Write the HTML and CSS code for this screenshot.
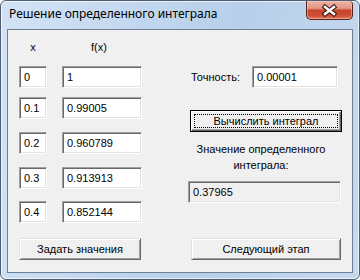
FILE: index.html
```html
<!DOCTYPE html>
<html lang="ru">
<head>
<meta charset="utf-8">
<title>Решение определенного интеграла</title>
<link rel="stylesheet" href="styles.css">
</head>
<body>
<div class="window">
  <div class="titlebar">
    <span class="title">Решение определенного интеграла</span>
    <div class="close">
      <svg width="45" height="17" viewBox="0 0 45 17">
        <path d="M18 5 L27 12 M27 5 L18 12" stroke="#3b1610" stroke-width="4.6" stroke-linecap="square" fill="none"/>
        <path d="M18 5 L27 12 M27 5 L18 12" stroke="#ffffff" stroke-width="2.4" stroke-linecap="square" fill="none"/>
      </svg>
    </div>
  </div>
  <div class="client">
    <div class="left">
      <div class="grid head"><span class="hx">x</span><span class="hf">f(x)</span></div>
      <div class="grid row row-a"><div class="tb">0</div><div class="tb">1</div></div>
      <div class="grid row row-b"><div class="tb">0.1</div><div class="tb">0.99005</div></div>
      <div class="grid row"><div class="tb">0.2</div><div class="tb">0.960789</div></div>
      <div class="grid row"><div class="tb">0.3</div><div class="tb">0.913913</div></div>
      <div class="grid row row-e"><div class="tb">0.4</div><div class="tb">0.852144</div></div>
      <button class="btn btn-set">Задать значения</button>
    </div>
    <div class="right">
      <div class="prec"><span class="prec-label">Точность:</span><div class="tb tb-prec">0.00001</div></div>
      <button class="btn btn-def"><span class="focus">Вычислить интеграл</span></button>
      <div class="caption">Значение определенного<br>интеграла:</div>
      <div class="tb tb-ro">0.37965</div>
      <button class="btn btn-next">Следующий этап</button>
    </div>
  </div>
</div>
</body>
</html>
```

FILE: styles.css
```css
html, body {
  margin: 0;
  padding: 0;
}
body {
  width: 360px;
  height: 280px;
  overflow: hidden;
  background: #ffffff;
  font-family: "Liberation Sans", Arial, sans-serif;
  font-size: 11px;
  color: #000;
}
.window {
  box-sizing: border-box;
  width: 360px;
  height: 280px;
  border: 1px solid #4d5e73;
  border-radius: 6px;
  background: linear-gradient(100deg, #d3e3f5 0%, #c2d7ef 35%, #b8cfea 60%, #c6daf0 100%);
  box-shadow: inset 0 0 0 1px rgba(255,255,255,0.65);
  padding: 0 6px 6px 6px;
  display: flex;
  flex-direction: column;
}
.titlebar {
  height: 28px;
  display: flex;
  align-items: flex-start;
}
.title {
  flex: 1;
  font-family: "Noto Sans", "Open Sans", sans-serif;
  font-size: 12px;
  line-height: 16px;
  margin-top: 5px;
  padding-left: 2px;
  color: #000;
}
.close {
  width: 47px;
  height: 19px;
  box-sizing: border-box;
  border: 1px solid #5a2318;
  border-top: none;
  border-radius: 0 4px 5px 5px;
  background: linear-gradient(#eab1a4 0%, #e39886 40%, #c8452b 52%, #cc4f33 80%, #e0785a 100%);
  box-shadow: inset 0 0 0 1px rgba(255,220,210,0.45);
  display: flex;
  align-items: center;
  justify-content: center;
}
.client {
  height: 244px;
  box-sizing: border-box;
  background: #f0f0f0;
  border: 1px solid #6d7f95;
  display: flex;
  align-items: flex-start;
  padding: 10px 0 0 11px;
}
.left {
  width: 123px;
  display: flex;
  flex-direction: column;
}
.grid {
  display: grid;
  grid-template-columns: 28px 80px;
  column-gap: 15px;
}
.head {
  height: 14px;
  line-height: 14px;
}
.hx {
  text-align: center;
}
.hf {
  padding-left: 29px;
}
.row { margin-top: 13px; }
.row-a { margin-top: 12px; }
.row-b { margin-top: 9px; }
.row-e { margin-top: 12px; }
.tb {
  box-sizing: border-box;
  height: 22px;
  background: #ffffff;
  border: 1px solid;
  border-color: #a0a0a0 #ffffff #ffffff #a0a0a0;
  box-shadow: inset 1px 1px 0 #696969, inset -1px -1px 0 #e3e3e3;
  padding: 1px 2px 1px 4px;
  line-height: 18px;
  white-space: nowrap;
  overflow: hidden;
}
.btn {
  box-sizing: border-box;
  height: 22px;
  margin: 0;
  padding: 0;
  font-family: "Liberation Sans", Arial, sans-serif;
  font-size: 11px;
  color: #000;
  background: #f0f0f0;
  border: 1px solid;
  border-color: #e3e3e3 #696969 #696969 #e3e3e3;
  box-shadow: inset 1px 1px 0 #ffffff, inset -1px -1px 0 #a0a0a0;
  line-height: 18px;
  text-align: center;
}
.btn-set {
  margin-top: 15px;
  width: 122px;
}
.right {
  width: 154px;
  margin-left: 46px;
  margin-top: 26px;
  display: flex;
  flex-direction: column;
  align-items: flex-start;
}
.prec {
  width: 150px;
  height: 22px;
  display: flex;
  align-items: center;
}
.prec-label {
  flex: 1;
  padding-left: 3px;
}
.tb-prec {
  width: 86px;
}
.btn-def {
  margin-top: 22px;
  margin-left: 2px;
  width: 152px;
  border: 1px solid #000;
  box-shadow: inset 1px 1px 0 #ffffff, inset -1px -1px 0 #696969, inset -2px -2px 0 #a0a0a0;
  display: flex;
  padding: 3px;
}
.focus {
  flex: 1;
  border: 1px dotted #000;
  line-height: 12px;
}
.caption {
  margin-top: 9px;
  width: 154px;
  box-sizing: border-box;
  padding-right: 8px;
  text-align: center;
  line-height: 16px;
}
.tb-ro {
  margin-top: 8px;
  width: 153px;
  background: #f0f0f0;
}
.btn-next {
  margin-top: 35px;
  margin-left: 3px;
  width: 150px;
}
```
